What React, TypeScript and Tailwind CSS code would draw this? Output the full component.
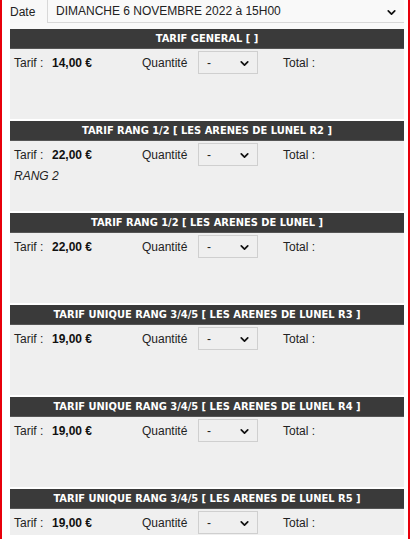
import { ChevronDown } from "lucide-react"

const tarifs = [
  { title: "TARIF GENERAL [ ]", price: "14,00 €" },
  { title: "TARIF RANG 1/2 [ LES ARENES DE LUNEL R2 ]", price: "22,00 €", note: "RANG 2" },
  { title: "TARIF RANG 1/2 [ LES ARENES DE LUNEL ]", price: "22,00 €" },
  { title: "TARIF UNIQUE RANG 3/4/5 [ LES ARENES DE LUNEL R3 ]", price: "19,00 €" },
  { title: "TARIF UNIQUE RANG 3/4/5 [ LES ARENES DE LUNEL R4 ]", price: "19,00 €" },
  { title: "TARIF UNIQUE RANG 3/4/5 [ LES ARENES DE LUNEL R5 ]", price: "19,00 €" },
]

function Qty() {
  return (
    <div className="relative w-[60px] h-[23px] border border-[#cfcfcf] bg-[#efefef] flex items-center">
      <span className="pl-[8px] text-[12px] text-[#222]">-</span>
      <ChevronDown size={13} strokeWidth={3.2} className="absolute right-[6px] top-[5px] text-[#111]" />
    </div>
  )
}

export default function App() {
  return (
    <div className="min-h-[539px] bg-white border-x-2 border-[#e8000b] pl-2 pr-1 font-['Liberation_Sans',Arial,sans-serif] text-[12px] leading-[14px] text-[#222]">
      {/* ── Date ── */}
      <div className="flex h-[23px] bg-[#f8f8f8]">
        <div className="w-[37px] flex items-center">Date</div>
        <div className="relative flex-1 -mt-px border border-[#d8d8d8] border-r-0 bg-[#f9f9f9] flex items-center pl-[8px]">
          DIMANCHE 6 NOVEMBRE 2022 à 15H00
          <ChevronDown size={13} strokeWidth={3.2} className="absolute right-[6px] top-[6px] text-[#111]" />
        </div>
      </div>

      <div className="h-[6px] bg-[#f9f9f9]" />

      {/* ── Tarifs ── */}
      <div className="flex flex-col">
        {tarifs.map((t, i) => (
          <div key={t.title} className={`bg-[#efefef] overflow-hidden ${i === 5 ? "h-[46px]" : "h-[90px] mb-[2px]"}`}>
            <div className="h-[20px] bg-[#3a3a3a] border-b border-[#555] flex items-center justify-center text-white font-bold text-[11px] font-['DejaVu_Sans_Condensed','DejaVu_Sans',sans-serif] [font-stretch:condensed]">
              {t.title}
            </div>
            <div className="flex items-center h-[23px] mt-[2px] pl-1">
              <span className="w-[38px]">Tarif :</span>
              <span className="w-[90px] font-bold text-[#111]">{t.price}</span>
              <span className="w-[56px]">Quantité</span>
              <Qty />
              <span className="ml-[25px]">Total :</span>
            </div>
            {t.note && <div className="pl-1 mt-[3px] italic">{t.note}</div>}
          </div>
        ))}
      </div>
    </div>
  )
}
